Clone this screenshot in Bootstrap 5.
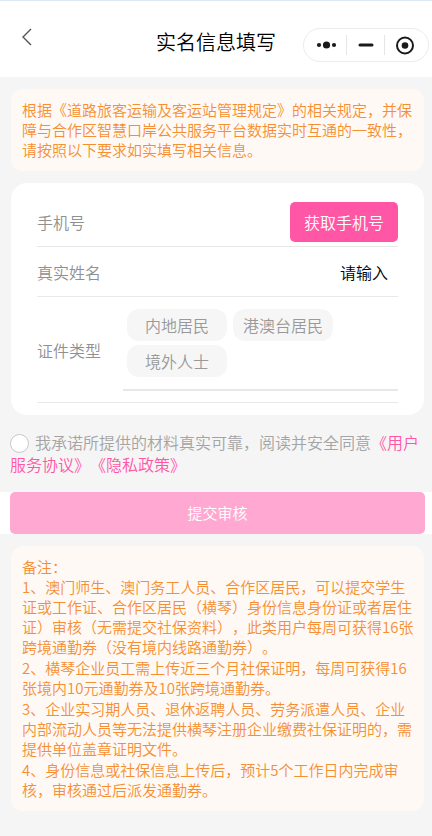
<!DOCTYPE html>
<html lang="zh-CN">
<head>
<meta charset="utf-8">
<meta name="viewport" content="width=device-width, initial-scale=1">
<title>实名信息填写</title>
<link href="https://cdn.jsdelivr.net/npm/bootstrap@5.3.0/dist/css/bootstrap.min.css" rel="stylesheet">
<style>
  body { background: #f5f5f5; color: #000; font: 350 16px/20px "Noto Sans CJK SC", sans-serif; text-spacing-trim: space-all; }
  .btn { font-weight: 350; }
  .topbar { background: #fff; border-top: 1px solid #dde8f5; padding: 27px 3px 15px; }
  .topbar h1 { font-size: 20px; font-weight: 350; line-height: 28px; }
  .back { color: #555; height: 18px; line-height: 0; margin-left: 18px; }
  .capsule { width: 126px; height: 34px; border: 1px solid #ececec; border-radius: 17px; background: #fff; }
  .capsule button + button { border-left: 1px solid #e6e6e6; }
  .capsule button { height: 20px; line-height: 0; color: #1a1a1a; }
  .page { padding: 12px 8px 24px 11px; }
  .notice { background: #fff9f6; color: #f58f32; border-radius: 12px; font-size: 15px; padding: 11px 6px 11px 11px; }
  .notice li + li { margin-top: 1px; }
  .panel { background: #fff; border-radius: 16px; padding: 14px 26px 12px 26px; color: #909090; }
  .field { border-bottom: 1px solid #e8e8e8; min-height: 50px; }
  .pink { background: #ff57a5; border-radius: 5px; height: 40px; color: #fff; padding: 0 14px; }
  .name-input { font-weight: 350; color: #000; padding-right: 10px; width: 160px; }
  .name-input::placeholder { color: #000; opacity: 1; }
  .choices { width: 275px; border-bottom: 2px solid #e8e8e8; padding: 12px 4px; margin-bottom: 11px; row-gap: 4px; column-gap: 6px; }
  .choice { background: #f6f6f6; color: #999; border-radius: 12px; width: 100px; height: 32px; }
  .agree { color: #a4a4a4; line-height: 22px; padding: 16px 2px 17px 10px; }
  .agree a { color: #ff57a5; text-decoration: none; }
  .agree .form-check-input { float: none; width: 19px; height: 19px; margin: 0 6px 0 0; border-color: #c8c8c8; vertical-align: -4px; }
  .submit-strip { background: #fff; padding: 0 7px 0 10px; }
  .submit { background: #ffa9d2; color: #fff; border-radius: 5px; height: 42px; font-size: 15px; }
</style>
<script src="https://cdn.jsdelivr.net/npm/bootstrap@5.3.0/dist/js/bootstrap.bundle.min.js"></script>
</head>
<body>
<header class="topbar d-flex align-items-start">
  <div class="flex-fill w-25 d-flex">
    <button type="button" class="back btn border-0 p-0" aria-label="返回">
      <svg width="13" height="18" viewBox="0 0 13 18" fill="none" stroke="currentColor" stroke-width="1.4"><path d="M10 1 2 9l8 8"/></svg>
    </button>
  </div>
  <h1 class="m-0 text-nowrap">实名信息填写</h1>
  <div class="flex-fill w-25 d-flex justify-content-end">
    <div class="capsule d-flex align-items-center flex-shrink-0">
      <button type="button" class="btn border-top-0 border-bottom-0 border-end-0 rounded-0 p-0 flex-fill" aria-label="更多">
        <svg width="22" height="20" viewBox="0 0 22 20" fill="currentColor"><circle cx="4" cy="10" r="2.1"/><circle cx="11.500" cy="10" r="3.6"/><circle cx="19" cy="10" r="2.1"/></svg>
      </button>
      <button type="button" class="btn border-top-0 border-bottom-0 border-end-0 rounded-0 p-0 flex-fill" aria-label="最小化">
        <svg width="18" height="20" viewBox="0 0 18 20" stroke="currentColor" stroke-width="3" stroke-linecap="round"><path d="M3 10h12"/></svg>
      </button>
      <button type="button" class="btn border-top-0 border-bottom-0 border-end-0 rounded-0 p-0 pe-1 flex-fill" aria-label="关闭">
        <svg width="20" height="20" viewBox="0 0 20 20"><circle cx="10" cy="10.500" r="8" fill="none" stroke="currentColor" stroke-width="2"/><circle cx="10" cy="10.500" r="3.300" fill="currentColor"/></svg>
      </button>
    </div>
  </div>
</header>

<main>
  <div class="page pb-0">
    <p class="notice mb-0">根据《道路旅客运输及客运站管理规定》的相关规定，并保障与合作区智慧口岸公共服务平台数据实时互通的一致性，请按照以下要求如实填写相关信息。</p>
  </div>

  <form>
    <div class="page pb-0">
      <div class="panel">
        <div class="field d-flex align-items-center justify-content-between">
          <span>手机号</span>
          <button type="button" class="pink btn border-0">获取手机号</button>
        </div>
        <div class="field d-flex align-items-center justify-content-between">
          <label for="realname">真实姓名</label>
          <input id="realname" type="text" class="name-input border-0 bg-transparent text-end" placeholder="请输入">
        </div>
        <div class="field d-flex align-items-center justify-content-between" role="group" aria-labelledby="idtype">
          <span id="idtype">证件类型</span>
          <div class="choices d-flex flex-wrap">
            <button type="button" class="choice btn border-0 p-0">内地居民</button>
            <button type="button" class="choice btn border-0 p-0">港澳台居民</button>
            <button type="button" class="choice btn border-0 p-0">境外人士</button>
          </div>
        </div>
      </div>
    </div>

    <div class="agree">
      <input class="form-check-input" type="radio" id="agree"><label class="d-inline" for="agree">我承诺所提供的材料真实可靠，阅读并安全同意</label><a href="#">《用户服务协议》</a><a href="#">《隐私政策》</a>
    </div>

    <div class="submit-strip">
      <button type="submit" class="submit btn border-0 w-100 p-0">提交审核</button>
    </div>
  </form>

  <div class="page">
    <section class="notice">
      <p class="mb-0">备注：</p>
      <ol class="list-unstyled mb-0">
        <li>1、澳门师生、澳门务工人员、合作区居民，可以提交学生证或工作证、合作区居民（横琴）身份信息身份证或者居住证）审核（无需提交社保资料），此类用户每周可获得16张跨境通勤券（没有境内线路通勤券）。</li>
        <li>2、横琴企业员工需上传近三个月社保证明，每周可获得16张境内10元通勤券及10张跨境通勤券。</li>
        <li>3、企业实习期人员、退休返聘人员、劳务派遣人员、企业内部流动人员等无法提供横琴注册企业缴费社保证明的，需提供单位盖章证明文件。</li>
        <li>4、身份信息或社保信息上传后，预计5个工作日内完成审核，审核通过后派发通勤券。</li>
      </ol>
    </section>
  </div>
</main>
</body>
</html>
